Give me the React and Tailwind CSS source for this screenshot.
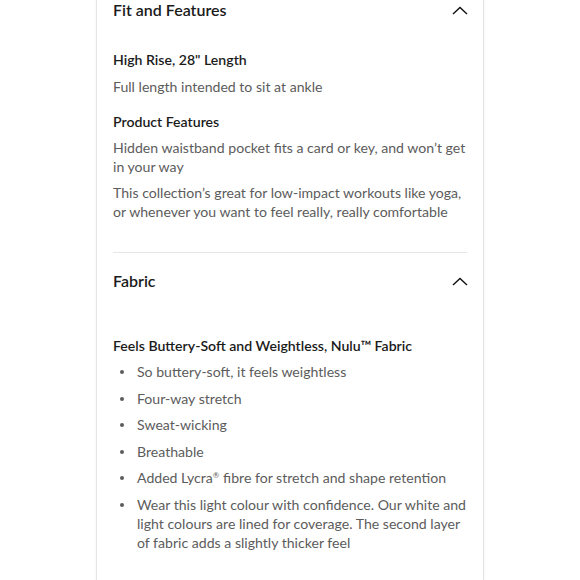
import React from 'react';

const Chevron = () => (
    <svg width="16" height="9" viewBox="0 0 16 9" fill="none" className="shrink-0">
        <path d="M1 8L8 1.5L15 8" stroke="#111" strokeWidth="1.4" />
    </svg>
);

const bullets = [
    'So buttery-soft, it feels weightless',
    'Four-way stretch',
    'Sweat-wicking',
    'Breathable',
    <>Added Lycra<span className="relative -top-[5px] text-[8px] leading-none">®</span> fibre for stretch and shape retention</>,
    'Wear this light colour with confidence. Our white and light colours are lined for coverage. The second layer of fabric adds a slightly thicker feel',
];

export default function App() {
    return (
        <div className="w-[580px] h-[580px] bg-white overflow-hidden flex justify-center" style={{ fontFamily: 'Lato, "Open Sans", sans-serif' }}>
            <div className="w-[388px] h-full border-x border-[#e4e4e4] shadow-[0_0_3px_rgba(0,0,0,0.06)] px-4 bg-white">
                {/* Fit and Features */}
                <div className="flex items-center justify-between h-5 -mr-[1px]">
                    <h2 className="text-[16px] font-semibold text-[#1b1b1b] leading-5">Fit and Features</h2>
                    <Chevron />
                </div>
                <div className="mt-[30px] -mr-1 text-[14.1px] leading-[19px]">
                    <p className="font-semibold text-[#1b1b1b]">High Rise, 28" Length</p>
                    <p className="mt-[8px] text-[#5c5c5c]">Full length intended to sit at ankle</p>
                    <p className="mt-[16px] font-semibold text-[#1b1b1b]">Product Features</p>
                    <p className="mt-[7px] text-[#5c5c5c]">Hidden waistband pocket fits a card or key, and won’t get in your way</p>
                    <p className="mt-[7px] text-[#5c5c5c]">This collection’s great for low-impact workouts like yoga, or whenever you want to feel really, really comfortable</p>
                </div>
                <div className="mt-[31px] border-t border-[#e6e6e6]" />

                {/* Fabric */}
                <div className="mt-[18px] flex items-center justify-between h-5 -mr-[1px]">
                    <h2 className="text-[16px] font-semibold text-[#1b1b1b] leading-5">Fabric</h2>
                    <Chevron />
                </div>
                <div className="mt-[45px] -mr-1 text-[14.1px] leading-[19px]">
                    <p className="font-semibold text-[#1b1b1b]">Feels Buttery-Soft and Weightless, Nulu™ Fabric</p>
                    <ul className="mt-[7px] space-y-[7.5px]">
                        {bullets.map((b, i) => (
                            <li key={i} className="flex text-[#5c5c5c]">
                                <span className="w-[24px] shrink-0 pl-[7px] pt-[8px]">
                                    <span className="block w-1 h-1 rounded-full bg-[#5c5c5c]" />
                                </span>
                                <span>{b}</span>
                            </li>
                        ))}
                    </ul>
                </div>
            </div>
        </div>
    );
}
